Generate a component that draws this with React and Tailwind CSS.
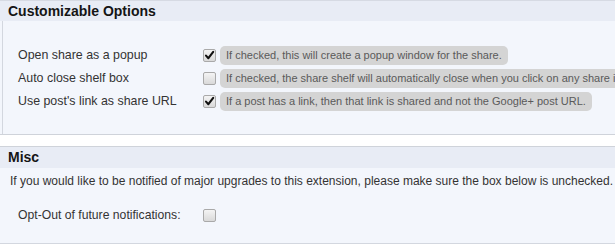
const Checkbox = ({ checked }) => (
  <span className="flex h-[13px] w-[13px] shrink-0 items-center justify-center rounded-[2px] border border-[#a9a9a9] bg-gradient-to-b from-[#f4f4f4] to-[#d9d9d9]">
    {checked && (
      <svg width="11" height="11" viewBox="0 0 11 11">
        <path d="M2 5.6 L4.4 8.2 L9.2 1.8" fill="none" stroke="#111" strokeWidth="2.1" strokeLinecap="round" strokeLinejoin="round" />
      </svg>
    )}
  </span>
);

const OptionRow = ({ label, checked, hint }) => (
  <div className="flex h-[23px] items-center">
    <span className="w-[200px] shrink-0 pl-[15px] text-[12.4px] text-[#333]">{label}</span>
    <Checkbox checked={checked} />
    <span className="ml-[4px] whitespace-nowrap rounded-[5px] bg-[#d4d4d4] px-[6px] py-[2px] text-[11px] leading-[15px] text-[#5a5a5a]">
      {hint}
    </span>
  </div>
);

const options = [
  { label: 'Open share as a popup', checked: true, hint: 'If checked, this will create a popup window for the share.' },
  { label: 'Auto close shelf box', checked: false, hint: 'If checked, the share shelf will automatically close when you click on any share item.' },
  { label: "Use post's link as share URL", checked: true, hint: 'If a post has a link, then that link is shared and not the Google+ post URL.' },
];

export default function App() {
  return (
    <div className="h-[244px] w-[615px] overflow-hidden bg-[#f3f6fc] font-['Liberation_Sans',Arial,sans-serif]">
      <section className="border-t border-[#d6dae3]">
        <h2 className="flex h-[20px] items-center bg-[#e8ecf5] pl-[8px] text-[14px] font-bold text-[#151515]">
          Customizable Options
        </h2>
        <div className="ml-[2px] h-[113px] overflow-hidden border-l border-[#d3d7df] pt-[23px]">
          {options.map((o) => (
            <OptionRow key={o.label} {...o} />
          ))}
        </div>
      </section>
      <div className="h-[13px] border-y border-[#cfd3da] bg-white" />
      <section>
        <h2 className="flex h-[21px] items-center bg-[#e8ecf5] pl-[8px] text-[14px] font-bold text-[#151515]">
          Misc
        </h2>
        <p className="whitespace-nowrap pl-[10px] pt-[6px] text-[12px] leading-[15px] text-[#333]">
          If you would like to be notified of major upgrades to this extension, please make sure the box below is unchecked.
        </p>
        <div className="mt-[16px] flex h-[20px] items-center">
          <span className="w-[203px] shrink-0 pl-[18px] text-[12.2px] text-[#333]">Opt-Out of future notifications:</span>
          <Checkbox checked={false} />
        </div>
        <div className="mt-[18px] border-t border-[#d3d7df]" />
      </section>
    </div>
  );
}
